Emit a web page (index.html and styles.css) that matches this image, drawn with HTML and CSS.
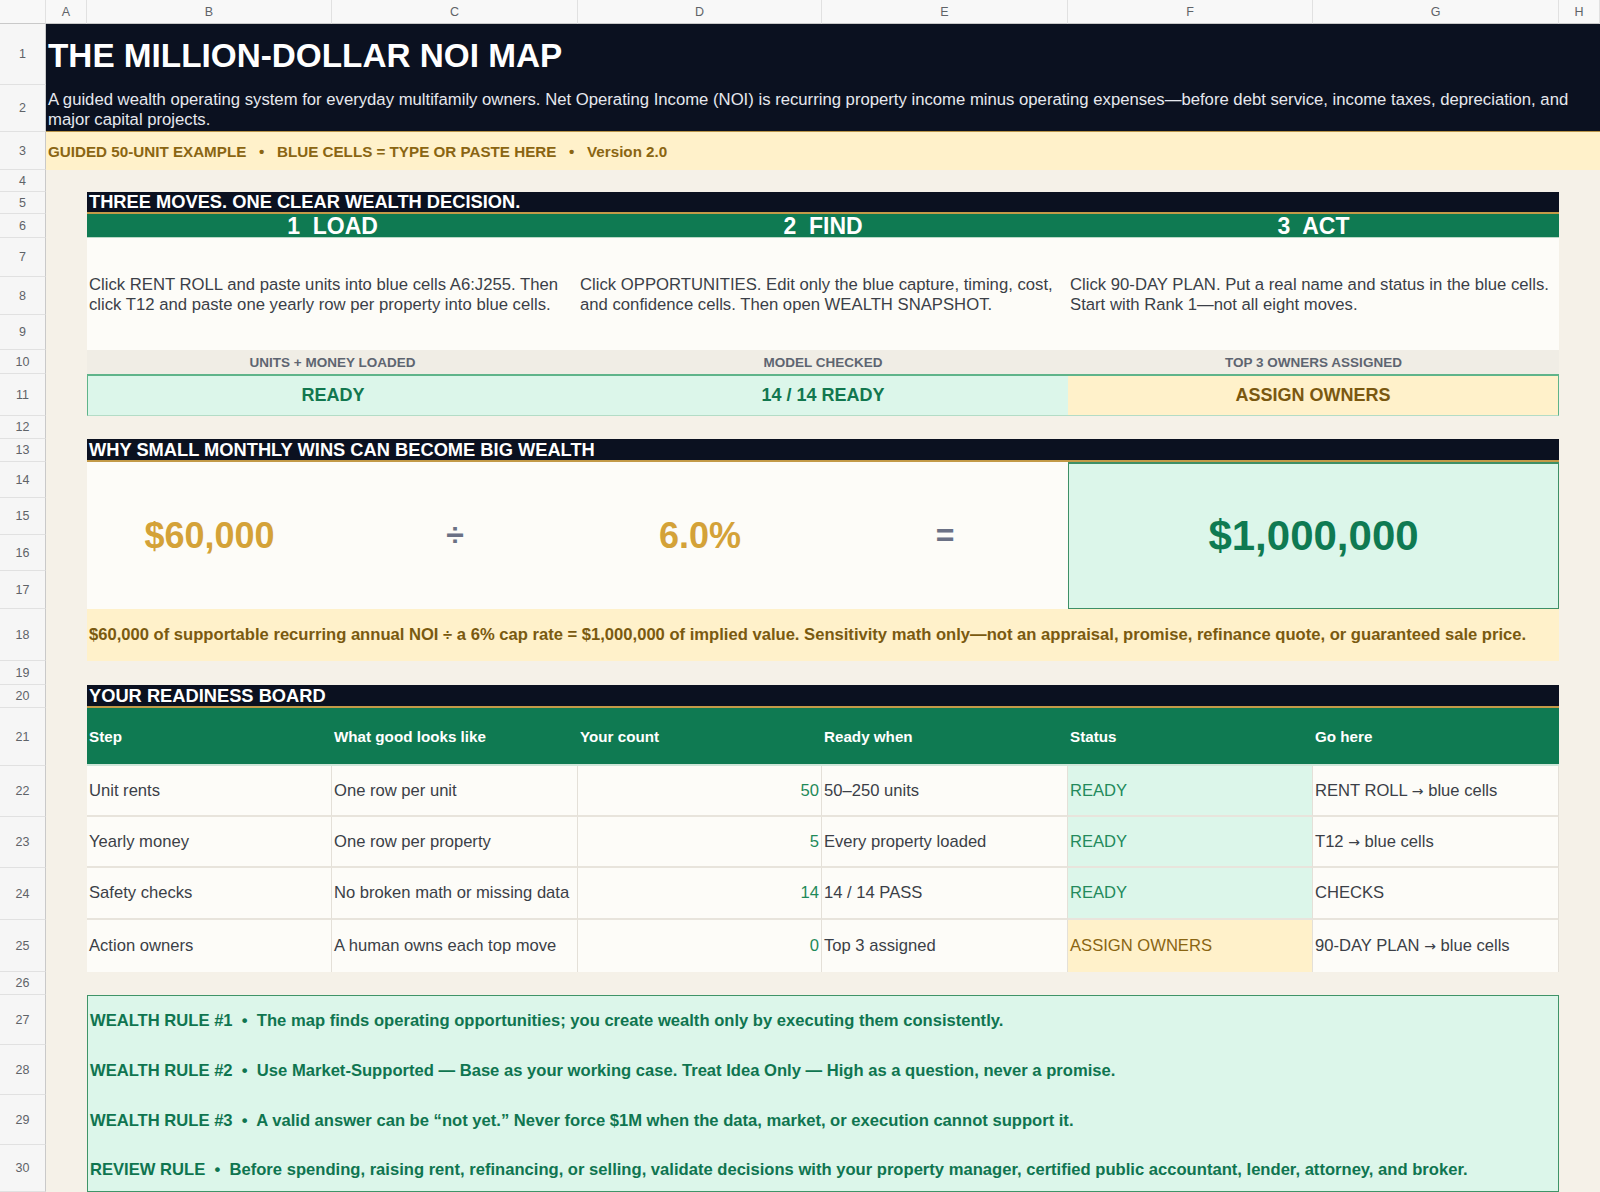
FILE: index.html
```html
<!DOCTYPE html>
<html lang="en">
<head>
    <meta charset="UTF-8">
    <meta name="viewport" content="width=device-width, initial-scale=1.0">
    <title>The Million-Dollar NOI Map</title>
    <link rel="stylesheet" href="styles.css">
</head>
<body>
    <div class="sheet">
        <div class="corner"></div>
        <div class="col-head">A</div>
        <div class="col-head">B</div>
        <div class="col-head">C</div>
        <div class="col-head">D</div>
        <div class="col-head">E</div>
        <div class="col-head">F</div>
        <div class="col-head">G</div>
        <div class="col-head">H</div>

        <div class="row-num">1</div>
        <div class="row-num">2</div>
        <div class="row-num">3</div>
        <div class="row-num">4</div>
        <div class="row-num">5</div>
        <div class="row-num">6</div>
        <div class="row-num">7</div>
        <div class="row-num">8</div>
        <div class="row-num">9</div>
        <div class="row-num">10</div>
        <div class="row-num">11</div>
        <div class="row-num">12</div>
        <div class="row-num">13</div>
        <div class="row-num">14</div>
        <div class="row-num">15</div>
        <div class="row-num">16</div>
        <div class="row-num">17</div>
        <div class="row-num">18</div>
        <div class="row-num">19</div>
        <div class="row-num">20</div>
        <div class="row-num">21</div>
        <div class="row-num">22</div>
        <div class="row-num">23</div>
        <div class="row-num">24</div>
        <div class="row-num">25</div>
        <div class="row-num">26</div>
        <div class="row-num">27</div>
        <div class="row-num">28</div>
        <div class="row-num">29</div>
        <div class="row-num">30</div>

        <div class="title">THE MILLION-DOLLAR NOI MAP</div>
        <div class="subtitle">A guided wealth operating system for everyday multifamily owners. Net Operating Income (NOI) is recurring property income minus operating expenses—before debt service, income taxes, depreciation, and major capital projects.</div>
        <div class="tagline">GUIDED 50-UNIT EXAMPLE   •   BLUE CELLS = TYPE OR PASTE HERE   •   Version 2.0</div>

        <!-- three moves -->
        <section class="moves">
            <div class="band">THREE MOVES. ONE CLEAR WEALTH DECISION.</div>
            <div class="move-head">1  LOAD</div>
            <div class="move-head">2  FIND</div>
            <div class="move-head">3  ACT</div>
            <div class="move-text">Click RENT ROLL and paste units into blue cells A6:J255. Then click T12 and paste one yearly row per property into blue cells.</div>
            <div class="move-text">Click OPPORTUNITIES. Edit only the blue capture, timing, cost, and confidence cells. Then open WEALTH SNAPSHOT.</div>
            <div class="move-text">Click 90-DAY PLAN. Put a real name and status in the blue cells. Start with Rank 1—not all eight moves.</div>
            <div class="check-label">UNITS + MONEY LOADED</div>
            <div class="check-label">MODEL CHECKED</div>
            <div class="check-label">TOP 3 OWNERS ASSIGNED</div>
            <div class="check-value ok first">READY</div>
            <div class="check-value ok">14 / 14 READY</div>
            <div class="check-value warn last">ASSIGN OWNERS</div>
        </section>

        <!-- cap rate math -->
        <section class="wealth">
            <div class="band">WHY SMALL MONTHLY WINS CAN BECOME BIG WEALTH</div>
            <div class="figure gold">$60,000</div>
            <div class="figure op">÷</div>
            <div class="figure gold">6.0%</div>
            <div class="figure op">=</div>
            <div class="result">$1,000,000</div>
            <div class="note">$60,000 of supportable recurring annual NOI ÷ a 6% cap rate = $1,000,000 of implied value. Sensitivity math only—not an appraisal, promise, refinance quote, or guaranteed sale price.</div>
        </section>

        <!-- readiness board -->
        <section class="board">
            <div class="band">YOUR READINESS BOARD</div>
            <div class="board-head">Step</div>
            <div class="board-head">What good looks like</div>
            <div class="board-head">Your count</div>
            <div class="board-head">Ready when</div>
            <div class="board-head">Status</div>
            <div class="board-head">Go here</div>

            <div class="cell">Unit rents</div>
            <div class="cell">One row per unit</div>
            <div class="cell num">50</div>
            <div class="cell">50–250 units</div>
            <div class="cell ready">READY</div>
            <div class="cell">RENT ROLL <span class="arrow">→</span> blue cells</div>

            <div class="cell">Yearly money</div>
            <div class="cell">One row per property</div>
            <div class="cell num">5</div>
            <div class="cell">Every property loaded</div>
            <div class="cell ready">READY</div>
            <div class="cell">T12 <span class="arrow">→</span> blue cells</div>

            <div class="cell">Safety checks</div>
            <div class="cell">No broken math or missing data</div>
            <div class="cell num">14</div>
            <div class="cell">14 / 14 PASS</div>
            <div class="cell ready">READY</div>
            <div class="cell">CHECKS</div>

            <div class="cell end">Action owners</div>
            <div class="cell end">A human owns each top move</div>
            <div class="cell num end">0</div>
            <div class="cell end">Top 3 assigned</div>
            <div class="cell pending end">ASSIGN OWNERS</div>
            <div class="cell end">90-DAY PLAN <span class="arrow">→</span> blue cells</div>
        </section>

        <!-- rules -->
        <section class="rules">
            <div class="rule">WEALTH RULE #1  •  The map finds operating opportunities; you create wealth only by executing them consistently.</div>
            <div class="rule">WEALTH RULE #2  •  Use Market-Supported — Base as your working case. Treat Idea Only — High as a question, never a promise.</div>
            <div class="rule">WEALTH RULE #3  •  A valid answer can be “not yet.” Never force $1M when the data, market, or execution cannot support it.</div>
            <div class="rule">REVIEW RULE  •  Before spending, raising rent, refinancing, or selling, validate decisions with your property manager, certified public accountant, lender, attorney, and broker.</div>
        </section>
    </div>
</body>
</html>
```

FILE: styles.css
```css
* {
    box-sizing: border-box;
}
body {
    margin: 0;
    font-family: 'Liberation Sans', Arial, sans-serif;
    background-color: #f5f1e8;
    overflow: hidden;
}
.sheet {
    display: grid;
    grid-template-columns: 46px 41px 245px 246px 244px 246px 245px 246px 41px;
    grid-template-rows: 24px 61px 47px 38px 22px 22px 24px 39px 38px 35px 24px 42px 23px 23px 36px 37px 36px 38px 52px 24px 23px 58px 51px 51px 52px 52px 23px 50px 50px 50px 47px;
    width: 1600px;
    height: 1192px;
    background-color: #f5f1e8;
}

/* spreadsheet frame */
.corner, .col-head {
    grid-row: 1;
    background-color: #f8f8f8;
    border-bottom: 1px solid #c9c9c9;
    border-right: 1px solid #e1e1e1;
    color: #5f6368;
    font-size: 12.5px;
    display: flex;
    align-items: center;
    justify-content: center;
}
.row-num {
    grid-column: 1;
    background-color: #f6f6f6;
    border-right: 1px solid #c9c9c9;
    border-bottom: 1px solid #e1e1e1;
    color: #5f6368;
    font-size: 12.5px;
    display: flex;
    align-items: center;
    justify-content: center;
}

/* header rows */
.title {
    grid-column: 2 / -1;
    grid-row: 2;
    background-color: #0b1120;
    color: #fff;
    font-size: 33.3px;
    font-weight: bold;
    padding: 2px 2px 0;
    display: flex;
    align-items: center;
}
.subtitle {
    grid-column: 2 / -1;
    grid-row: 3;
    background-color: #0b1120;
    color: #e6e8ee;
    font-size: 16.7px;
    line-height: 20px;
    padding: 5px 2px 0;
    border-bottom: 1px solid #b8944a;
}
.tagline {
    grid-column: 2 / -1;
    grid-row: 4;
    background-color: #fff1ca;
    color: #8a6512;
    font-size: 15.2px;
    font-weight: bold;
    white-space: pre;
    padding: 0 2px;
    display: flex;
    align-items: center;
}

.band {
    grid-column: 1 / -1;
    background-color: #0b1120;
    color: #fff;
    font-size: 18.3px;
    font-weight: bold;
    line-height: 20px;
    padding: 0 2px;
    border-bottom: 2px solid #c39a48;
    display: flex;
    align-items: flex-end;
}

/* three moves */
.moves {
    grid-column: 3 / 9;
    grid-row: 6 / 13;
    display: grid;
    grid-template-columns: 491px 490px 491px;
    grid-template-rows: 22px 24px 112px 24px 42px;
}
.move-head {
    background-color: #0f7a52;
    color: #fff;
    font-size: 23px;
    font-weight: bold;
    line-height: 23px;
    padding-top: 1px;
    text-align: center;
    white-space: pre;
    border-bottom: 1px solid #b9d8c6;
}
.move-text {
    background-color: #fdfcf8;
    color: #3b3f47;
    font-size: 16.7px;
    line-height: 20px;
    padding: 2px 2px 0;
    display: flex;
    align-items: center;
}
.check-label {
    background-color: #f0ede5;
    color: #5e6571;
    font-size: 13.5px;
    font-weight: bold;
    display: flex;
    align-items: center;
    justify-content: center;
}
.check-value {
    font-size: 18px;
    font-weight: bold;
    border-top: 2px solid #5fb48a;
    border-bottom: 1px solid #b3dcc6;
    display: flex;
    align-items: center;
    justify-content: center;
}
.check-value.ok {
    background-color: #dcf6ea;
    color: #12774f;
}
.check-value.warn {
    background-color: #fff1ca;
    color: #7a5810;
}
.check-value.first {
    border-left: 1px solid #5fb48a;
}
.check-value.last {
    border-right: 1px solid #5fb48a;
}

/* cap rate math */
.wealth {
    grid-column: 3 / 9;
    grid-row: 14 / 20;
    display: grid;
    grid-template-columns: 245px 246px 244px 246px 491px;
    grid-template-rows: 23px 147px 52px;
}
.figure {
    background-color: #fdfcf8;
    font-size: 36px;
    font-weight: bold;
    display: flex;
    align-items: center;
    justify-content: center;
}
.figure.gold {
    color: #d4a238;
}
.figure.op {
    color: #6b7185;
    font-size: 32px;
}
.result {
    background-color: #dcf6ea;
    color: #0f7a52;
    font-size: 42px;
    font-weight: bold;
    border: 1px solid #3d9066;
    border-top-width: 2px;
    display: flex;
    align-items: center;
    justify-content: center;
}
.note {
    grid-column: 1 / -1;
    background-color: #fff1ca;
    color: #7a5a10;
    font-size: 16.6px;
    font-weight: bold;
    padding: 0 2px;
    display: flex;
    align-items: center;
}

/* readiness board */
.board {
    grid-column: 3 / 9;
    grid-row: 21 / 27;
    display: grid;
    grid-template-columns: 245px 246px 244px 246px 245px 246px;
    grid-template-rows: 23px 58px 51px 51px 52px 52px;
}
.board-head {
    background-color: #0f7a52;
    color: #fff;
    font-size: 15.2px;
    font-weight: bold;
    padding: 0 2px;
    border-bottom: 2px solid #cfe6d9;
    display: flex;
    align-items: center;
}
.cell {
    background-color: #fdfcf8;
    color: #3b3f47;
    font-size: 16.6px;
    white-space: pre;
    padding: 0 2px;
    border-right: 1px solid #e4e0d8;
    border-bottom: 2px solid #e8e4dc;
    display: flex;
    align-items: center;
}
.cell .arrow {
    font-family: 'DejaVu Sans', sans-serif;
    font-size: 14px;
}
.cell.end {
    border-bottom: none;
}
.cell.num {
    color: #1f8a5a;
    justify-content: flex-end;
}
.cell.ready {
    background-color: #dcf6ea;
    color: #238a5c;
}
.cell.pending {
    background-color: #fff1ca;
    color: #8a6512;
}

/* rules */
.rules {
    grid-column: 3 / 9;
    grid-row: 28 / 32;
    background-color: #dcf6ea;
    border: 1px solid #3f9468;
    color: #0f7550;
    font-size: 16.6px;
    font-weight: bold;
    display: grid;
    grid-template-rows: 50px 50px 50px 47px;
}
.rule {
    padding: 0 2px;
    white-space: pre;
    display: flex;
    align-items: center;
}
```
